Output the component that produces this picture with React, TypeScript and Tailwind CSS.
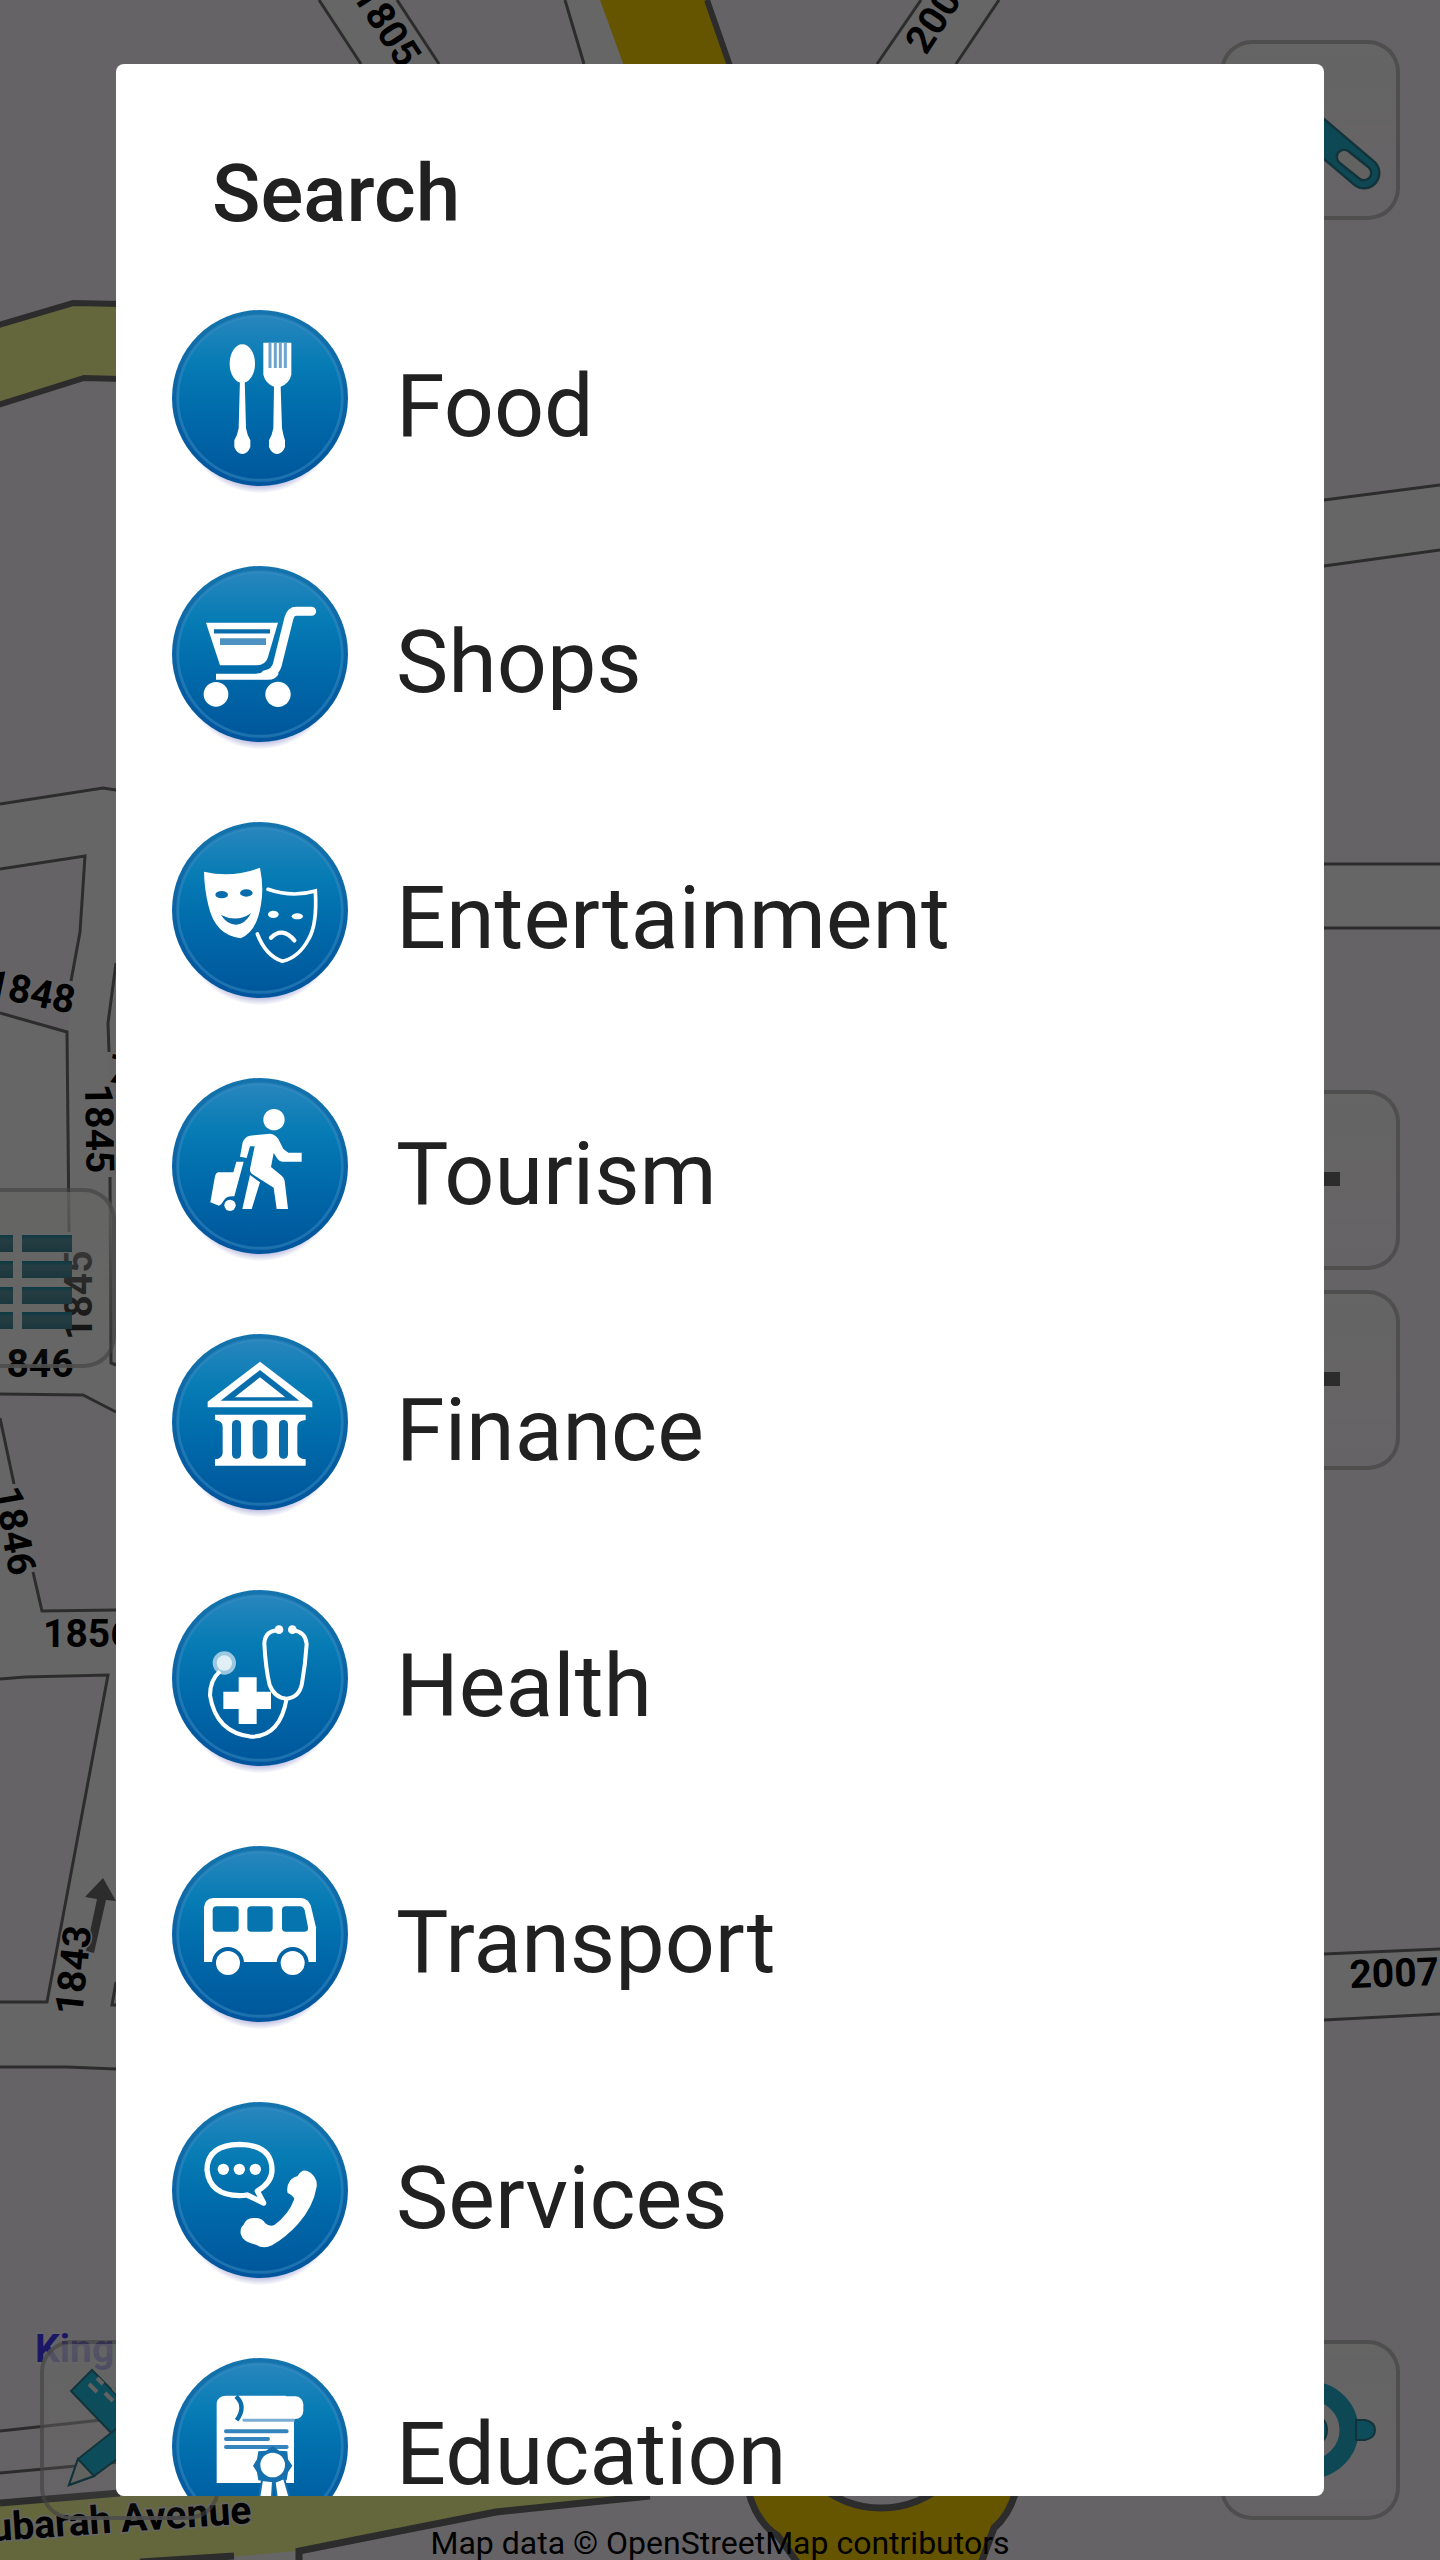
import type { ReactNode } from "react";

interface Category {
  label: string;
  icon: ReactNode;
}

const BLUE = "#0a6dab";

const categories: Category[] = [
  {
    label: "Food",
    icon: (
      <>
        <ellipse cx="235" cy="161" rx="38" ry="58" />
        <path d="M228 205h14l4 150q4 22 13 36v20q-8 21-24 21t-24-21v-20q9-14 13-36z" />
        <path d="M298 98h84v96q-6 26-32 36l4 125q4 22 9 36v20q-8 21-24 21t-24-21v-20q9-14 13-36l2-125q-26-10-32-36z" />
        <path d="M318 98v76M334 98v76M349 98v76M364 98v76" stroke="#6ea4cb" strokeWidth="9" />
      </>
    ),
  },
  {
    label: "Shops",
    icon: (
      <>
        <path d="M443 136h-46q-16 0-22 20l-33 132q-6 34-38 38" fill="none" stroke="white" strokeWidth="27" strokeLinecap="round" />
        <path d="M156 323h120q35-2 48-22l20 22q-8 18-32 18H156z" />
        <path d="M126 170h216l-31 106q-8 22-32 22H168z" />
        <path d="M150 196h168" stroke={BLUE} strokeWidth="13" />
        <path d="M168 227h138" stroke="#4d92c1" strokeWidth="20" />
        <circle cx="156" cy="385" r="37" />
        <circle cx="342" cy="385" r="38" />
      </>
    ),
  },
  {
    label: "Entertainment",
    icon: (
      <>
        <path d="M120 149q86 20 168-12q12 60 3 110q-12 82-61 102q-77-9-97-99q-12-50-13-101z" />
        <ellipse cx="173" cy="218" rx="19" ry="11" fill={BLUE} />
        <ellipse cx="247" cy="213" rx="19" ry="11" fill={BLUE} />
        <path d="M171 279q47 24 90-5q-18 34-45 34t-45-29z" fill={BLUE} />
        <g fill="none" stroke="white" strokeWidth="11" strokeLinecap="round">
          <path d="M312 202q72 25 142 5q6 100-20 144q-29 55-79 67q-50-17-75-82" />
          <path d="M321 347q34-34 70 8" strokeWidth="13" />
        </g>
        <ellipse cx="328" cy="277" rx="16" ry="11" />
        <ellipse cx="400" cy="283" rx="17" ry="9" />
      </>
    ),
  },
  {
    label: "Tourism",
    icon: (
      <>
        <circle cx="330" cy="125" r="32" />
        <path d="M228 236l8-43q6-17 22-20l60-6q16 2 25 16l15 30 15 11h40v27h-58q-8 0-14-8l-12-18-8 42 32 26q8 6 9 16l10 84h-34l-9-64-66-42q-6-6-5-14l14-68h-14l-10 35z" />
        <path d="M258 291l30 22-25 80h-28z" />
        <path d="M162 283h46l9-32h22l-28 104q-22-2-30 10-8 14-16 18l-26-10 14-78q2-10 9-12z" />
        <circle cx="198" cy="382" r="17" />
      </>
    ),
  },
  {
    label: "Finance",
    icon: (
      <>
        <path d="M288 83l157 120v17H131v-17z" />
        <path d="M288 108l118 92H170z" fill={BLUE} />
        <path d="M288 130l76 60H212z" />
        <path d="M153 242h272v16q-25 2-25 20v78q0 18 25 20v19H153v-19q23-2 23-20v-78q0-18-23-20z" />
        <rect x="204" y="258" width="27" height="116" rx="13" fill={BLUE} />
        <rect x="266" y="258" width="44" height="116" rx="19" fill={BLUE} />
        <rect x="345" y="258" width="27" height="116" rx="13" fill={BLUE} />
      </>
    ),
  },
  {
    label: "Health",
    icon: (
      <>
        <g fill="none" stroke="white" strokeWidth="12">
          <path d="M345 121q-42 0-44 40q4 76 16 124q15 39 51 41q38-4 46-46q10-56 14-118q-4-38-43-41" />
          <path d="M368 326q-20 114-106 114q-106-12-124-124q0-46 30-72" />
        </g>
        <circle cx="345" cy="119" r="13" />
        <circle cx="385" cy="119" r="13" />
        <circle cx="181" cy="219" r="35" opacity="0.6" />
        <circle cx="181" cy="219" r="23" opacity="0.7" />
        <path d="M224 262h54v43h43v52h-43v45h-54v-45h-46v-52h46z" />
      </>
    ),
  },
  {
    label: "Transport",
    icon: (
      <>
        <path d="M120 348V184q2-26 28-28h264q20 2 28 22l16 66v104z" />
        <rect x="146" y="181" width="78" height="76" rx="12" fill="#0674af" />
        <rect x="250" y="181" width="76" height="76" rx="12" fill="#0674af" />
        <path d="M354 192q0-11 11-11h42q11 0 15 12l10 50q2 14-10 14h-57q-11 0-11-11z" fill="#0674af" />
        <circle cx="192" cy="351" r="48" fill="#0264a5" />
        <circle cx="386" cy="351" r="48" fill="#0264a5" />
        <circle cx="192" cy="351" r="36" />
        <circle cx="386" cy="351" r="36" />
      </>
    ),
  },
  {
    label: "Services",
    icon: (
      <>
        <path
          d="M280 267q44-26 44-63q0-75-97-77q-98 2-98 77q8 76 98 77q12 0 22-2l50 24z"
          fill="none"
          stroke="white"
          strokeWidth="16"
          strokeLinejoin="round"
        />
        <circle cx="178" cy="202" r="17" />
        <circle cx="226" cy="202" r="17" />
        <circle cx="274" cy="202" r="17" />
        <path d="M391 291q-4-10-20-18q-5-20 7-37q12-12 22-13q12-20 26-17q14 2 26 20q8 12 6 28q-10 60-56 112q-36 40-78 64q-26 12-48-2q-40-8-46-32q-2-20 8-26q8-22 30-22q26-2 36 16q10 10 26 6q44-32 61-79z" />
      </>
    ),
  },
  {
    label: "Education",
    icon: (
      <>
        <path d="M158 375V134q4-20 28-21h180v60h24v202z" />
        <rect x="222" y="115" width="196" height="68" rx="24" />
        <path d="M216 115q32 30 2 72" fill="none" stroke={BLUE} strokeWidth="13" />
        <path d="M236 187h156" stroke="#79add3" strokeWidth="9" />
        <path d="M186 220h182M186 243h126M186 267h182" stroke="#3484bd" strokeWidth="12" strokeLinecap="round" />
        <path d="M326 265l20 13 24 2 2 24 13 19-13 20-4 24-22 3-20 13-20-13-23-3-4-24-12-20 12-19 4-24 23-2z" fill="#1670ae" />
        <circle cx="326" cy="321" r="37" />
        <path d="M294 366l-12 76 24-13 16 19 5-78zM332 372l10 74 14-20 26 10-22-76z" stroke="#1670ae" strokeWidth="6" />
      </>
    ),
  },
];

function CategoryIcon({ children }: { children: ReactNode }) {
  return (
    <svg className="size-48 shrink-0" viewBox="0 0 576 576" fill="white" aria-hidden="true">
      <ellipse cx="288" cy="282" rx="248" ry="268" fill="url(#disc-shadow)" />
      <circle cx="288" cy="264" r="264" fill="url(#disc-rim)" />
      <circle cx="288" cy="264" r="247" fill="url(#disc)" stroke="#3d92c8" strokeOpacity="0.45" strokeWidth="9" />
      {children}
    </svg>
  );
}

function MapCanvas() {
  return (
    <svg
      className="absolute inset-0 h-full w-full"
      viewBox="0 0 1440 2560"
      preserveAspectRatio="xMidYMid slice"
      fontFamily="Roboto, sans-serif"
      aria-hidden="true"
    >
      {/* Side roads */}
      <g fill="white">
        <path d="M319 0l42 64h78L397 0zM565 0l19 64h40L604 0zM921 0l-44 64h79L999 0z" />
        <path d="M1324 500l116-15v65l-116 16zM1324 864h116v64h-116zM1324 1954l116-5v65l-116 6z" />
        <path d="M0 804l103-16 13 2v173l-8 60 2 340 6 2v47l-33-17-83-1v-381l67 19 2 157V1032l2-51 9-49 5-76-85 13zM0 1418l42 193h74v394h-4l4-23v87H0v-65h47l61-329-83 2-25 2z" />
      </g>
      <g fill="none" stroke="#6f6f6f" strokeWidth="3">
        <path d="M319 0l42 64M397 0l42 64M565 0l19 64M921 0l-44 64M999 0l-43 64" />
        <path d="M1324 500l116-15M1324 566l116-16M1324 864h116M1324 928h116M1324 1954l116-5M1324 2020l116-6" />
        <path d="M0 804l103-16 13 2M0 869l85-13-5 76-9 49M0 1013l67 19 2 200M116 963l-8 60 1 29M110 1177l1 186 5 2" />
        <path d="M0 1394l83 1 33 17M0 1418l14 66M33 1572l9 39 74-1M0 1679l25-2 83-2-61 327H0M0 2067h67l49 2M116 1982l-4 23h4" />
        <path d="M0 2431l120-13M0 2473l120-11" />
      </g>

      {/* Main roads */}
      <path d="M600 0h107l23 66H624z" fill="#ffd400" />
      <path d="M707 0l23 66" stroke="#6f6f6f" strokeWidth="6" />
      <path d="M-5 326l78-23 47 1v75l-36-1-89 28z" fill="#fbff96" stroke="#6f6f6f" strokeWidth="6" />
      <path d="M237 2549h62v14h-62z" fill="white" />
      <path d="M0 2503l120-10h530l-154 19-200 39-66 6-130 8H0z" fill="#fbff96" />
      <path d="M0 2503l120-10M650 2496l-154 16-197 39v12M140 2562l94-6" fill="none" stroke="#6f6f6f" strokeWidth="7" />
      <path d="M748 2490q8 32 30 46l22 30h180l14-38q16-14 22-38z" fill="#ffd400" stroke="#6f6f6f" strokeWidth="7" />
      <circle cx="881" cy="2411" r="97" fill="#fff8ff" stroke="#6f6f6f" strokeWidth="7" />

      {/* One-way arrow */}
      <path d="M103 1878l-18 19 12 2-11 52 8 2 12-53 10 1z" fill="#6f6f6f" />

      <g fill="black" stroke="white" strokeWidth="3" paintOrder="stroke" fontSize="39" fontWeight="700">
        <text transform="translate(400 70) rotate(57)" textAnchor="end">1805</text>
        <text transform="translate(926 56) rotate(-57)">200</text>
        <text transform="translate(72 1014) rotate(12)" textAnchor="end">1848</text>
        <text transform="translate(106 1081) rotate(12)">7</text>
        <text transform="translate(85 1084) rotate(89)">1845</text>
        <text transform="translate(92 1340) rotate(-90)">1845</text>
        <text x="-16" y="1377">1846</text>
        <text transform="translate(-6 1489) rotate(80)">1846</text>
        <text x="43" y="1647">1856</text>
        <text transform="translate(82 2016) rotate(-84)">1843</text>
        <text transform="translate(1350 1988) rotate(-2)">2007</text>
        <text x="35" y="2362" fill="#4537ff">King</text>
        <text transform="translate(252 2523) rotate(-4)" textAnchor="end">ubarah Avenue</text>
      </g>
    </svg>
  );
}

interface MapButtonProps {
  label: string;
  className?: string;
  children: ReactNode;
}

function MapButton({ label, className = "", children }: MapButtonProps) {
  return (
    <button
      type="button"
      aria-label={label}
      className={`size-[180px] overflow-hidden rounded-[32px] border-4 border-[#a0a0a0]/60 bg-linear-to-b from-[#fcfcfa]/80 to-[#fcfcfa]/5 ${className}`}
    >
      <svg className="-m-1 size-[180px]" viewBox="0 0 180 180" stroke="#2f7f92" strokeWidth="2" fill="#22bfe0">
        {children}
      </svg>
    </button>
  );
}

function MapControls() {
  return (
    <>
      <MapButton label="Find" className="absolute top-10 right-10">
        <path d="M70 70L144 133" stroke="#2f7f92" strokeWidth="33" strokeLinecap="round" />
        <path d="M70 70L144 133" stroke="#22b4d2" strokeWidth="28" strokeLinecap="round" />
        <path d="M124 117l20 16" stroke="#2f7f92" strokeWidth="17" strokeLinecap="round" />
        <path d="M124 117l20 16" stroke="#f4f4f2" strokeWidth="12" strokeLinecap="round" />
      </MapButton>

      <div className="absolute top-[1090px] right-10 flex flex-col gap-5">
        <MapButton label="Zoom in">
          <path d="M58 82h62v14H58zM83 57h14v64H83z" fill="#6f6f6f" stroke="none" />
        </MapButton>
        <MapButton label="Zoom out">
          <path d="M58 82h62v14H58z" fill="#6f6f6f" stroke="none" />
        </MapButton>
      </div>

      <MapButton label="Menu" className="absolute top-[1188px] -left-16">
        <g stroke="none" fill="url(#menu-bar)">
          <path d="M50 47h27v17H50zM86 47h50v17H86z" />
          <path d="M50 73h27v17H50zM86 73h50v17H86z" />
          <path d="M50 99h27v17H50zM86 99h50v17H86z" />
          <path d="M50 124h27v17H50zM86 124h50v17H86z" />
        </g>
      </MapButton>

      <MapButton label="Tools" className="absolute bottom-10 left-10">
        <path d="M52 30L31 51l69 72 22-22z" />
        <path d="M49 44l8 8M57 38l6 6M65 53l8 8M73 48l6 6" stroke="#f4f4f2" strokeWidth="4" />
        <path d="M100 70L38 119l-9 26 25-9 65-48z" />
        <path d="M38 119l-9 26 25-9z" fill="#f4f4f2" />
      </MapButton>

      <MapButton label="My location" className="absolute right-10 bottom-10">
        <circle cx="90" cy="90" r="39" fill="none" stroke="#22b4d2" strokeWidth="19" />
        <path d="M136 80h9q10 2 10 10t-10 10h-9zM44 80h-9q-10 2-10 10t10 10h9z" />
        <circle cx="90" cy="90" r="17" />
      </MapButton>

      <p className="absolute inset-x-0 bottom-0 text-center font-[Roboto,sans-serif] text-[32px] leading-[34px] text-black">
        Map data © OpenStreetMap contributors
      </p>
    </>
  );
}

export default function App() {
  return (
    <main className="relative flex h-screen flex-col overflow-hidden bg-[#fff8ff]">
      <svg className="absolute size-0" aria-hidden="true">
        <defs>
          <linearGradient id="disc" x2="0" y2="1">
            <stop offset="0" stopColor="#2886bd" />
            <stop offset="0.3" stopColor="#067bb4" />
            <stop offset="0.6" stopColor="#006aaa" />
            <stop offset="1" stopColor="#00579b" />
          </linearGradient>
          <linearGradient id="disc-rim" x2="0" y2="1">
            <stop offset="0" stopColor="#1474ad" />
            <stop offset="1" stopColor="#00549c" />
          </linearGradient>
          <radialGradient id="disc-shadow">
            <stop offset="0.9" stopColor="#b4b4dc" />
            <stop offset="1" stopColor="#ffffff" />
          </radialGradient>
          <linearGradient id="menu-bar" x2="0" y2="1">
            <stop offset="0" stopColor="#1f91a8" />
            <stop offset="0.3" stopColor="#5f9aa6" />
            <stop offset="1" stopColor="#43899a" />
          </linearGradient>
        </defs>
      </svg>

      <MapCanvas />
      <MapControls />

      {/* Search dialog */}
      <div className="relative flex min-h-0 flex-1 bg-black/60 px-[116px] py-16">
        <section
          role="dialog"
          aria-modal="true"
          aria-labelledby="search-title"
          className="flex flex-1 flex-col overflow-hidden rounded-lg bg-white font-[Roboto,sans-serif] text-[#212121]"
        >
          <h1 id="search-title" className="px-24 pt-[82px] pb-9 text-[80px] leading-[96px] font-medium">
            Search
          </h1>
          <ul className="min-h-0 flex-1 overflow-y-auto [scrollbar-width:none]">
            {categories.map(({ label, icon }) => (
              <li key={label}>
                <button type="button" className="flex w-full items-center gap-10 px-12 py-8 text-left text-[88px] leading-[104px]">
                  <CategoryIcon>{icon}</CategoryIcon>
                  {label}
                </button>
              </li>
            ))}
          </ul>
        </section>
      </div>
    </main>
  );
}
